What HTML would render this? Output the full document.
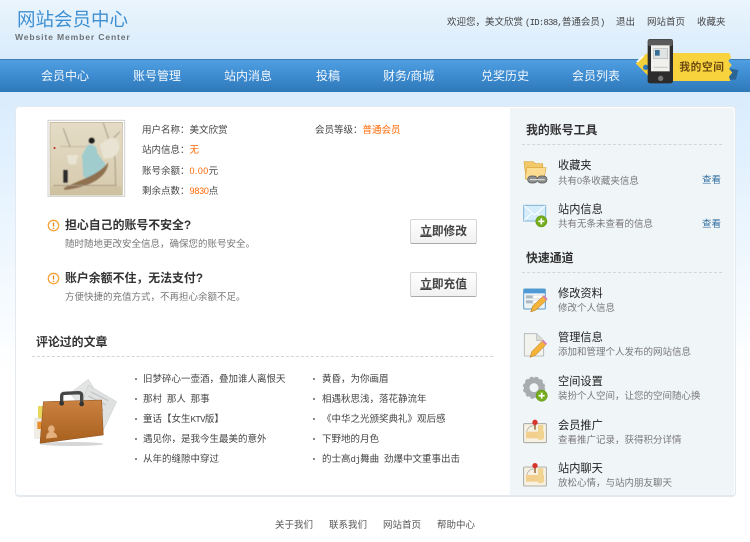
<!DOCTYPE html>
<html lang="zh-CN">
<head>
<meta charset="utf-8">
<title>网站会员中心</title>
<style>
html,body{margin:0;padding:0}
body{width:750px;height:542px;position:relative;overflow:hidden;background:#fff;font-family:"Liberation Sans","WenQuanYi Zen Hei","Noto Sans CJK SC",sans-serif;font-size:9.5px;color:#444}
.t{position:absolute;white-space:nowrap;line-height:12px}
.o{color:#f60}
.m{font-family:"Liberation Mono",monospace;font-size:9px;letter-spacing:-.6px}
.d{font-family:"Liberation Sans",sans-serif;font-size:9px;letter-spacing:-.2px}
.bg{position:absolute;left:0;top:0;width:750px;height:59px;background:linear-gradient(#eaf5fd,#d9ebfb)}
.bg2{position:absolute;left:0;top:92px;width:750px;height:280px;background:linear-gradient(#d9ecfd,#eaf5fe 45%,#fff)}
.nav{position:absolute;left:0;top:59px;width:750px;height:33px;background:linear-gradient(#509fe2,#3d8bd0 50%,#2f79b8);border-top:1px solid #3f80b8;box-sizing:border-box}
.n{position:absolute;top:69px;color:#f2f8fd;font-size:12px;line-height:14px;white-space:nowrap}
.card{position:absolute;left:15px;top:106px;width:721px;height:391px;box-sizing:border-box;background:#fff;border:1px solid #e3e9ee;border-bottom-width:2px;border-radius:4px}
.side{position:absolute;left:510px;top:108px;width:224px;height:387px;background:#f0f5f8;border-radius:0 3px 3px 0}
.h{position:absolute;white-space:nowrap;font-weight:bold;color:#333;font-size:11.9px;line-height:14px}
.dash{position:absolute;height:0;border-top:1px dashed #d2d6d8}
.st{position:absolute;left:558px;font-size:11.2px;line-height:13px;color:#222;white-space:nowrap}
.sd{position:absolute;left:558px;font-size:9.5px;line-height:12px;color:#777;white-space:nowrap}
.lk{position:absolute;left:702px;font-size:9.5px;line-height:12px;color:#2f6f9f;white-space:nowrap}
.btn{position:absolute;left:410px;width:67px;height:25px;box-sizing:border-box;border:1px solid #d5d5d5;border-bottom-color:#aaa;background:linear-gradient(#fff,#f1f1f1);border-radius:2px;text-align:center;font-size:11.7px;line-height:24px;font-weight:bold;color:#444}
.btn u{text-underline-offset:1px}
.b{position:absolute;width:2px;height:2px;background:#8a8a8a}
.l{position:absolute;font-size:9.5px;line-height:12px;color:#444;white-space:nowrap}
svg{position:absolute;overflow:visible}
</style>
</head>
<body>
<div class="bg"></div>
<div class="bg2"></div>

<div class="t" style="left:17px;top:9px;font-size:18.5px;line-height:22px;color:#3f90d2">网站会员中心</div>
<div class="t" style="left:15px;top:32px;font-size:8.6px;line-height:11px;font-weight:bold;letter-spacing:.85px;color:#6c7276">Website Member Center</div>

<div class="t" style="left:447px;top:17px">欢迎您，美文欣赏<span class="m" style="margin-left:2px;letter-spacing:-.8px">(ID:838,</span>普通会员<span class="m">)</span></div>
<div class="t" style="left:616px;top:17px">退出</div>
<div class="t" style="left:647px;top:17px">网站首页</div>
<div class="t" style="left:697px;top:17px">收藏夹</div>

<div class="nav"></div>
<div class="n" style="left:41px">会员中心</div>
<div class="n" style="left:133px">账号管理</div>
<div class="n" style="left:224px">站内消息</div>
<div class="n" style="left:316px">投稿</div>
<div class="n" style="left:383px">财务/商城</div>
<div class="n" style="left:481px">兑奖历史</div>
<div class="n" style="left:572px">会员列表</div>

<!-- phone + tag -->
<svg style="left:375px;top:0" width="375" height="110" viewBox="0 0 1125 330">
<path d="M1060 205 L1090 210 L1083 238 L1060 240Z" fill="#2a6596"/>
<path d="M782 190 L815 160 L900 160 L900 243 L835 243Z" fill="#f4cf3c"/>
<path d="M786 186 L805 168" stroke="#fff" stroke-width="5"/>
<circle cx="812" cy="202" r="8" fill="#2f79b8"/>
<path d="M890 159 H1063 L1068 172 L1060 183 L1070 195 L1062 206 L1072 218 L1062 230 L1066 243 H890Z" fill="#f8d33e"/>
<rect x="818" y="117" width="76" height="133" rx="7" fill="#2c2c2c"/>
<rect x="819" y="118" width="74" height="20" rx="6" fill="#5a5a5a"/>
<rect x="828" y="136" width="56" height="78" fill="#f0f0ec"/>
<rect x="836" y="146" width="42" height="30" fill="#dfe3e3" stroke="#a8a8a8" stroke-width="1.500"/>
<rect x="840" y="150" width="14" height="17" fill="#356f96"/>
<rect x="836" y="200" width="42" height="4" fill="#cfcfcf"/>
<circle cx="857" cy="235" r="8" fill="#777"/>
<text x="913" y="212" font-size="32" font-weight="bold" fill="#6b4a12" letter-spacing="2" font-family="'WenQuanYi Zen Hei','Noto Sans CJK SC',sans-serif">我的空间</text>
</svg>

<div class="card"></div>
<div class="side"></div>

<!-- avatar -->
<svg style="left:20px;top:105px" width="250" height="110" viewBox="0 0 750 330">
<defs>
<filter id="bl" x="-5%" y="-5%" width="110%" height="110%"><feGaussianBlur stdDeviation="1.500"/></filter>
<linearGradient id="pa" x1="0" y1="0" x2="0" y2="1"><stop offset="0" stop-color="#e4dcc6"/><stop offset="1" stop-color="#d6caad"/></linearGradient>
</defs>
<rect x="84" y="46" width="230" height="228" fill="#fff" stroke="#cfcfcf" stroke-width="3"/>
<rect x="90" y="52" width="217" height="218" fill="url(#pa)" stroke="#bcae8f" stroke-width="2"/>
<g filter="url(#bl)">
<path d="M92 245 H305 V268 H92Z" fill="#cfc2a3"/>
<path d="M250 54 L285 160 L287 240 M130 70 L150 125 M260 120 L300 80" stroke="#a79c86" stroke-width="3" fill="none"/>
<path d="M240 120 Q290 75 298 125 Q292 165 250 160Z" fill="#e9e3d4"/>
<path d="M120 125 H200" stroke="#a89d88" stroke-width="3" opacity=".5"/>
<path d="M140 150 H175 L168 178 H146Z" fill="#e9e3d3"/>
<circle cx="215" cy="107" r="9" fill="#1f1f1f"/>
<path d="M203 120 C220 115 232 125 232 145 L258 180 L228 205 L205 225 L190 215 L186 150Z" fill="#a0cccd"/>
<path d="M130 250 C175 225 230 215 265 172 C262 215 215 245 135 255Z" fill="#8f7150"/>
<rect x="130" y="195" width="13" height="38" fill="#2c2c2c"/>
<rect x="100" y="240" width="190" height="3" fill="#a79a80"/>
</g>
<rect x="101" y="126" width="5" height="6" fill="#c0302a"/>
</svg>

<div class="t" style="left:142px;top:125px">用户名称：美文欣赏</div>
<div class="t" style="left:142px;top:145px">站内信息：<span class="o">无</span></div>
<div class="t" style="left:142px;top:165px">账号余额：<span class="o d" style="letter-spacing:.4px">0.00</span>元</div>
<div class="t" style="left:142px;top:185px">剩余点数：<span class="o d">9830</span>点</div>
<div class="t" style="left:315px;top:125px">会员等级：<span class="o">普通会员</span></div>

<!-- warnings -->
<svg style="left:47px;top:219px" width="13" height="13" viewBox="0 0 13 13"><circle cx="6.500" cy="6.500" r="5.200" fill="#fff" stroke="#f5a33b" stroke-width="1.300"/><path d="M6.500 3.500V7.500M6.500 8.700V10" stroke="#e8841a" stroke-width="1.300"/></svg>
<div class="h" style="left:65px;top:218px">担心自己的账号不安全?</div>
<div class="t" style="left:65px;top:239px;color:#777">随时随地更改安全信息，确保您的账号安全。</div>
<div class="btn" style="top:219px"><u>立</u>即修改</div>

<svg style="left:47px;top:272px" width="13" height="13" viewBox="0 0 13 13"><circle cx="6.500" cy="6.500" r="5.200" fill="#fff" stroke="#f5a33b" stroke-width="1.300"/><path d="M6.500 3.500V7.500M6.500 8.700V10" stroke="#e8841a" stroke-width="1.300"/></svg>
<div class="h" style="left:65px;top:271px">账户余额不住，无法支付?</div>
<div class="t" style="left:65px;top:292px;color:#777">方便快捷的充值方式，不再担心余额不足。</div>
<div class="btn" style="top:272px"><u>立</u>即充值</div>

<!-- comments -->
<div class="h" style="left:36px;top:335px">评论过的文章</div>
<div class="dash" style="left:32px;top:356px;width:461px"></div>

<!-- briefcase -->
<svg style="left:20px;top:360px" width="110" height="110" viewBox="0 0 330 330">
<defs><linearGradient id="cs" x1="0" y1="0" x2="0" y2="1"><stop offset="0" stop-color="#cb8240"/><stop offset="1" stop-color="#a8601f"/></linearGradient></defs>
<ellipse cx="155" cy="252" rx="95" ry="6" fill="#bbb" opacity=".6"/>
<path d="M150 100 L205 58 L262 150 L215 180Z" fill="#e3e4e4" stroke="#b4b8ba"/>
<path d="M205 75 L290 125 L250 210 L170 170Z" fill="#dfe0e0" stroke="#b4b8ba"/>
<path d="M212 95 L265 122 M205 108 L258 135 M198 122 L250 150" stroke="#bdbfc0" stroke-width="3"/>
<rect x="54" y="138" width="18" height="44" fill="#e8d85e"/>
<rect x="44" y="175" width="26" height="60" fill="#f1ece4" stroke="#ccc"/>
<rect x="52" y="185" width="14" height="22" fill="#e88e2e"/>
<path d="M70 125 L245 120 L250 225 L60 250Z" fill="url(#cs)" stroke="#8a5120" stroke-width="1.500"/>
<path d="M125 130 V108 Q125 100 135 100 L175 98 Q185 98 185 106 V132" fill="none" stroke="#474747" stroke-width="10"/>
<circle cx="125" cy="130" r="7" fill="#333"/><circle cx="185" cy="132" r="7" fill="#333"/>
<path d="M78 236 Q78 220 88 216 A10 11 0 1 1 100 216 Q110 220 112 232Z" fill="#e3b07e"/>
</svg>

<div class="b" style="left:135px;top:378px"></div><div class="l" style="left:143px;top:374px">旧梦碎心一壶酒，叠加谁人离恨天</div>
<div class="b" style="left:135px;top:398px"></div><div class="l" style="left:143px;top:394px">那村<span class="m">&nbsp;</span>那人<span class="m">&nbsp;</span>那事</div>
<div class="b" style="left:135px;top:418px"></div><div class="l" style="left:143px;top:414px">童话【女生<span class="m">KTV</span>版】</div>
<div class="b" style="left:135px;top:438px"></div><div class="l" style="left:143px;top:434px">遇见你，是我今生最美的意外</div>
<div class="b" style="left:135px;top:458px"></div><div class="l" style="left:143px;top:454px">从年的缝隙中穿过</div>

<div class="b" style="left:313px;top:378px"></div><div class="l" style="left:322px;top:374px">黄昏，为你画眉</div>
<div class="b" style="left:313px;top:398px"></div><div class="l" style="left:322px;top:394px">相遇秋思浅，落花静流年</div>
<div class="b" style="left:313px;top:418px"></div><div class="l" style="left:322px;top:414px">《中华之光颁奖典礼》观后感</div>
<div class="b" style="left:313px;top:438px"></div><div class="l" style="left:322px;top:434px">下野地的月色</div>
<div class="b" style="left:313px;top:458px"></div><div class="l" style="left:322px;top:454px">的士高<span class="m">dj</span>舞曲<span class="m"> </span>劲爆中文重事出击</div>

<!-- sidebar -->
<div class="h" style="left:526px;top:123px">我的账号工具</div>
<div class="dash" style="left:522px;top:144px;width:200px"></div>

<!-- folder + mail -->
<svg style="left:510px;top:105px" width="50" height="140" viewBox="0 0 150 420">
<path d="M42 170 H70 L76 176 H98 L100 218 H48Z" fill="#f3c869" stroke="#d9a53e" stroke-width="2"/>
<path d="M50 188 H108 L102 222 H46Z" fill="#fcdc90" stroke="#d9a53e" stroke-width="2"/>
<rect x="53" y="213" width="29" height="21" rx="10" fill="#8d8f8f" stroke="#555" stroke-width="2"/>
<rect x="82" y="213" width="29" height="21" rx="10" fill="#8d8f8f" stroke="#555" stroke-width="2"/>
<path d="M60 224H104" stroke="#e8e8e8" stroke-width="3"/>
<rect x="41" y="301" width="66" height="47" fill="#d5ecfb" stroke="#7fb2d8" stroke-width="3"/>
<path d="M42 302 L74 330 L106 302M42 347 L66 324M106 347 L82 324" fill="none" stroke="#fff" stroke-width="3"/>
<circle cx="94" cy="349" r="17" fill="#75ad1c" stroke="#5c8f10" stroke-width="1.500"/>
<path d="M94 340V358M85 349H103" stroke="#fff" stroke-width="5"/>
</svg>
<div class="st" style="top:160px">收藏夹</div>
<div class="sd" style="top:175px">共有<span class="d">0</span>条收藏夹信息</div>
<div class="lk" style="top:175px">查看</div>

<div class="st" style="top:204px">站内信息</div>
<div class="sd" style="top:219px">共有无条未查看的信息</div>
<div class="lk" style="top:219px">查看</div>

<div class="h" style="left:526px;top:251px">快速通道</div>
<div class="dash" style="left:522px;top:272px;width:200px"></div>

<!-- edit + doc -->
<svg style="left:510px;top:240px" width="50" height="130" viewBox="0 0 150 390">
<rect x="41" y="147" width="65" height="60" rx="3" fill="#edf2f5" stroke="#5b9bc9" stroke-width="3"/>
<rect x="42" y="148" width="63" height="12" fill="#4d9ad6"/>
<rect x="48" y="166" width="20" height="9" fill="#aab8c1"/><rect x="70" y="166" width="28" height="9" fill="#fff" stroke="#ccc"/>
<rect x="48" y="181" width="20" height="9" fill="#aab8c1"/><rect x="70" y="181" width="15" height="9" fill="#fff" stroke="#ccc"/>
<path d="M62 216 L68 198 L100 168 L111 179 L78 210Z" fill="#f5b33a" stroke="#a66f14" stroke-width="1.500"/>
<path d="M100 168 L111 179" stroke="#d87fb2" stroke-width="6"/>
<path d="M43 281 H80 L101 302 V348 H43Z" fill="#f3f3ee" stroke="#aeb2b2" stroke-width="2.500"/>
<path d="M80 281 V302 H101" fill="#dcdcd6" stroke="#aeb2b2" stroke-width="2"/>
<path d="M60 352 L66 334 L98 302 L109 313 L76 346Z" fill="#f5b33a" stroke="#a66f14" stroke-width="1.500"/>
<path d="M98 302 L109 313" stroke="#d87fb2" stroke-width="6"/>
</svg>
<div class="st" style="top:288px">修改资料</div>
<div class="sd" style="top:303px">修改个人信息</div>
<div class="st" style="top:332px">管理信息</div>
<div class="sd" style="top:347px">添加和管理个人发布的网站信息</div>

<!-- gear + maps -->
<svg style="left:510px;top:365px" width="50" height="140" viewBox="0 0 150 420">
<circle cx="72" cy="68" r="22" fill="none" stroke="#a8acae" stroke-width="17"/>
<circle cx="72" cy="68" r="30" fill="none" stroke="#a8acae" stroke-width="7" stroke-dasharray="9 7"/>
<circle cx="95" cy="92" r="17" fill="#75ad1c" stroke="#5c8f10" stroke-width="1.500"/>
<path d="M95 83V101M86 92H104" stroke="#fff" stroke-width="5"/>
<g>
<rect x="41" y="176" width="68" height="57" rx="2" fill="#f6f1e2" stroke="#9a9a92" stroke-width="2.500"/>
<rect x="48" y="200" width="54" height="20" fill="#f3cf8e"/>
<rect x="84" y="180" width="16" height="44" fill="#f0d48f"/>
<path d="M50 200 Q56 180 74 182" fill="none" stroke="#aaa" stroke-width="2"/>
<rect x="73" y="172" width="4" height="22" fill="#8a5a2a"/>
<circle cx="75" cy="172" r="8" fill="#d8342b"/>
</g>
<g transform="translate(0,130)">
<rect x="41" y="176" width="68" height="57" rx="2" fill="#f6f1e2" stroke="#9a9a92" stroke-width="2.500"/>
<rect x="48" y="200" width="54" height="20" fill="#f3cf8e"/>
<rect x="84" y="180" width="16" height="44" fill="#f0d48f"/>
<path d="M50 200 Q56 180 74 182" fill="none" stroke="#aaa" stroke-width="2"/>
<rect x="73" y="172" width="4" height="22" fill="#8a5a2a"/>
<circle cx="75" cy="172" r="8" fill="#d8342b"/>
</g>
</svg>
<div class="st" style="top:376px">空间设置</div>
<div class="sd" style="top:391px">装扮个人空间，让您的空间随心换</div>
<div class="st" style="top:420px">会员推广</div>
<div class="sd" style="top:435px">查看推广记录，获得积分详情</div>
<div class="st" style="top:463px">站内聊天</div>
<div class="sd" style="top:478px">放松心情，与站内朋友聊天</div>

<!-- footer -->
<div class="t" style="left:275px;top:520px;color:#555">关于我们</div>
<div class="t" style="left:329px;top:520px;color:#555">联系我们</div>
<div class="t" style="left:383px;top:520px;color:#555">网站首页</div>
<div class="t" style="left:437px;top:520px;color:#555">帮助中心</div>
</body>
</html>
